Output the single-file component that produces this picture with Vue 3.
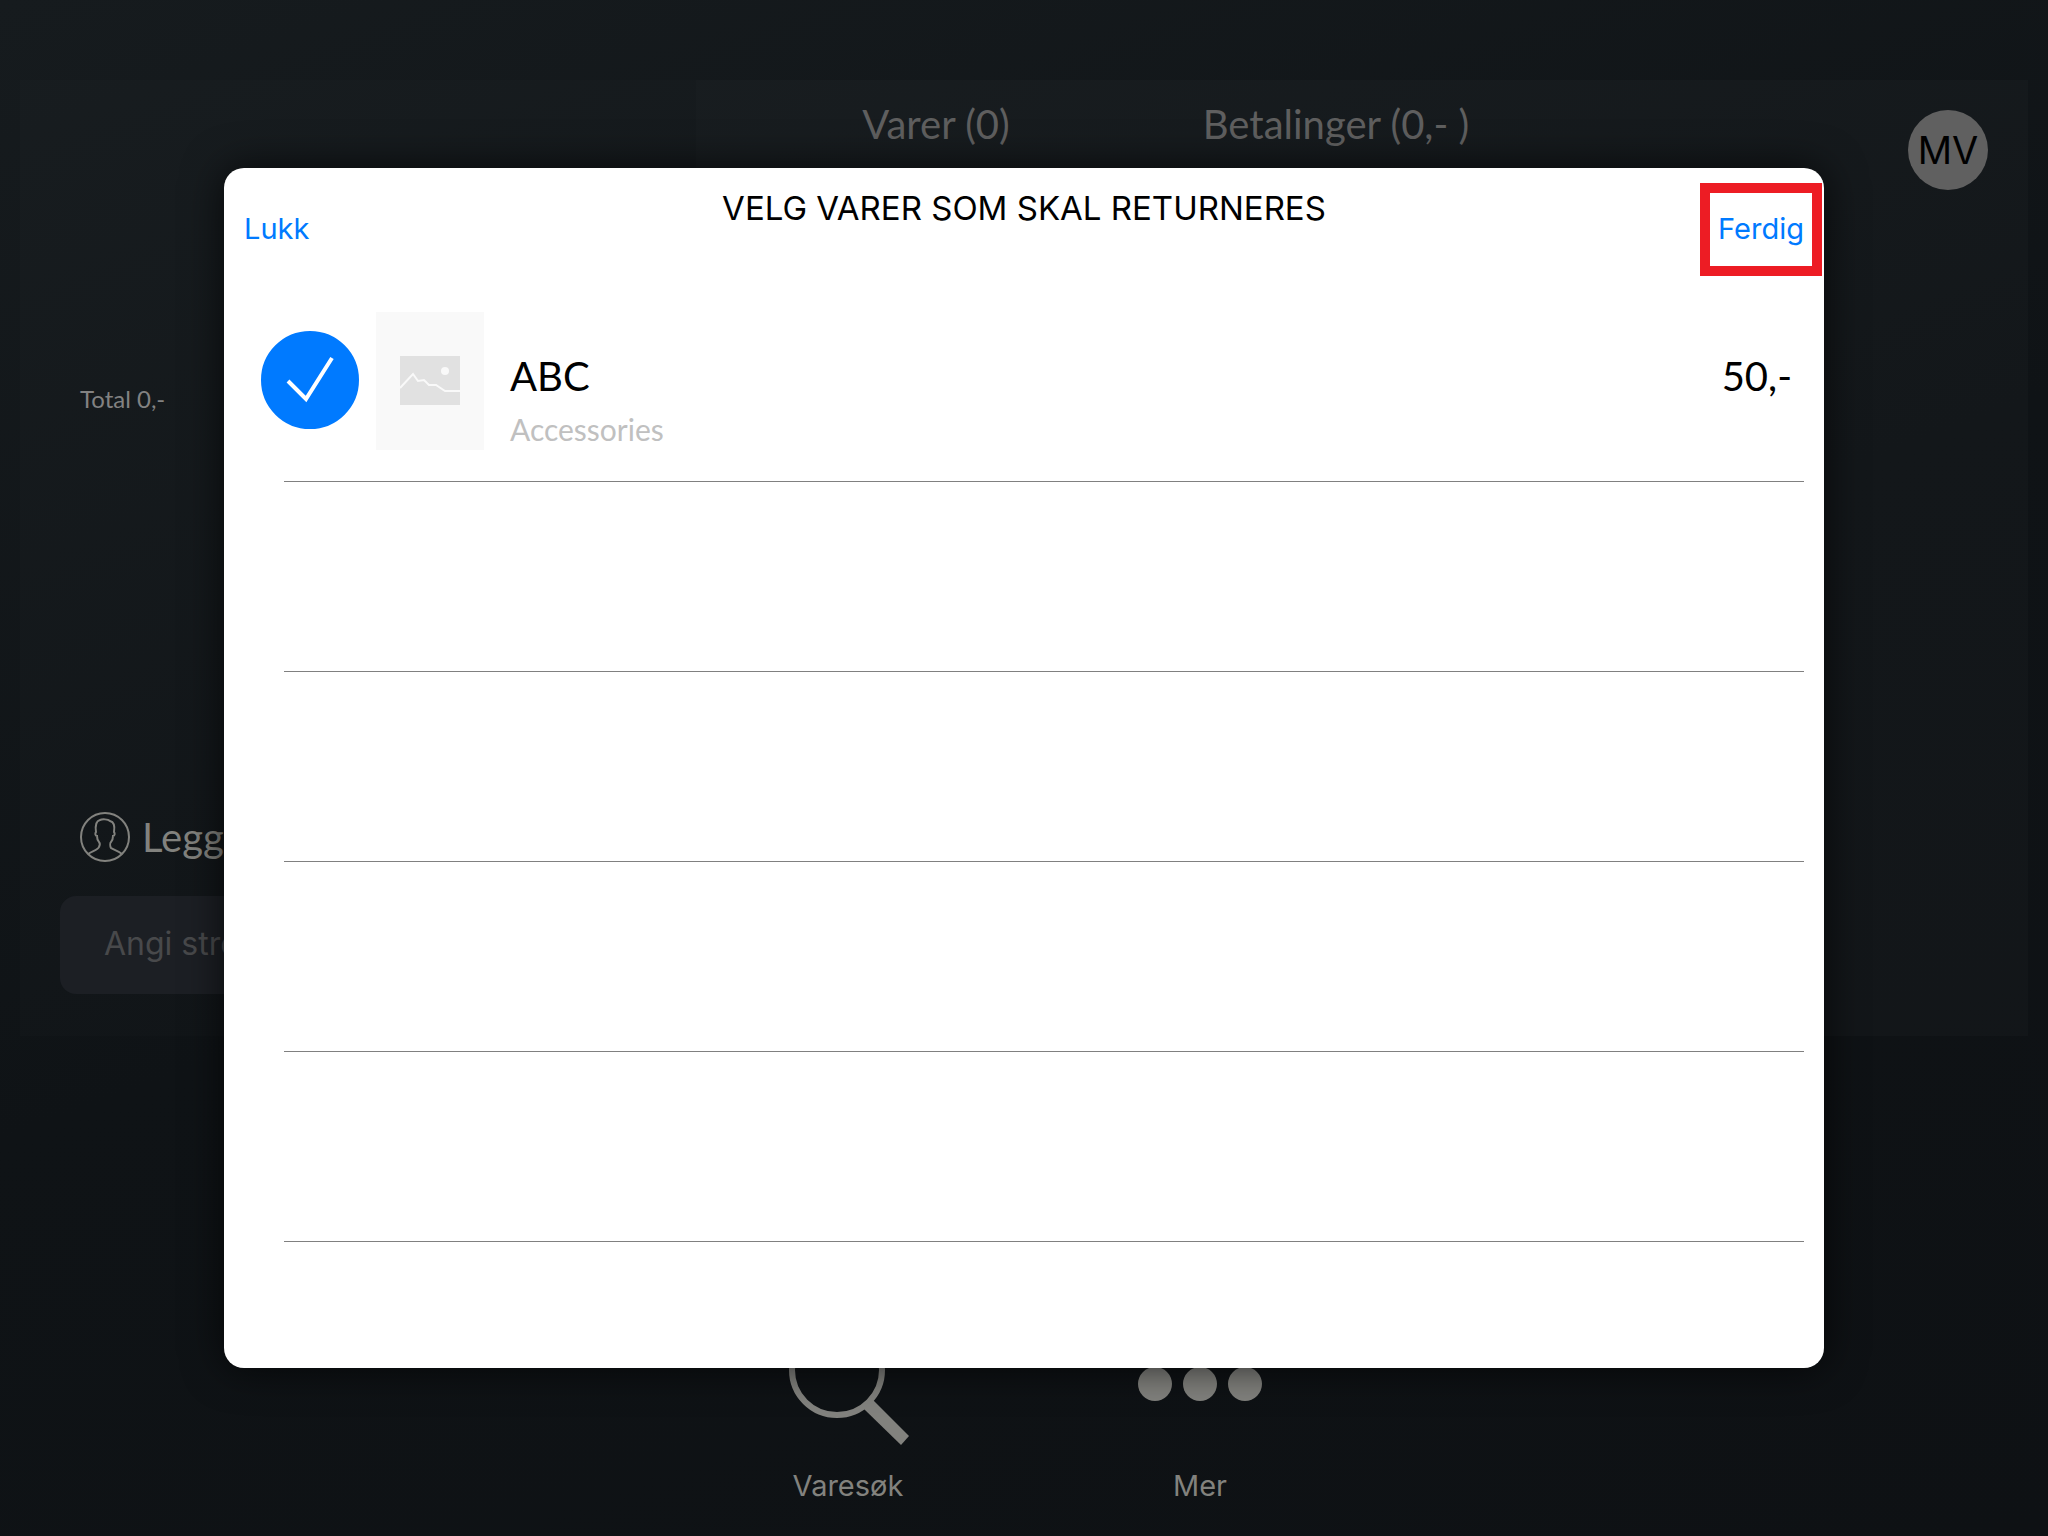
<template>
  <div class="pos-page">

    <!-- Register -->
    <main class="register">
      <section class="panel summary">
        <p class="total">Total {{ formatPrice(0) }}</p>

        <button class="customer-btn" type="button">
          <svg class="customer-icon" viewBox="0 0 50 50" aria-hidden="true">
            <circle cx="25" cy="25" r="24" />
            <path d="M8 42 C12 39 18 38 19 35 C20 33 20 31 19 30 C17 28 17 26 17 24 C15 24 15 21 16 20 C15 13 16 9 20 8 C22 7 28 7 30 9 C34 10 35 14 34 20 C35 21 35 24 33 24 C33 26 33 28 31 30 C30 31 30 34 31 36 C34 38 39 39 42 42" />
          </svg>
          <span>Legg til kunde</span>
        </button>

        <input
          v-model="barcode"
          class="barcode"
          type="text"
          placeholder="Angi strekkode"
          aria-label="Angi strekkode"
        />
      </section>

      <section class="panel basket">
        <div class="tabs">
          <button v-for="tab in tabs" :key="tab" class="tab" type="button">{{ tab }}</button>
        </div>
        <button class="avatar" type="button">MV</button>
      </section>
    </main>

    <!-- Bottom menu -->
    <nav class="bottom-nav">
      <button class="nav-btn" type="button">
        <svg class="nav-icon" viewBox="0 0 120 124" aria-hidden="true">
          <circle cx="49" cy="48" r="45" fill="none" stroke="currentColor" stroke-width="6" />
          <path d="M76 87 L85 78 L121 114 L113 123 Z" fill="currentColor" />
        </svg>
        <span>Varesøk</span>
      </button>
      <button class="nav-btn" type="button">
        <svg class="nav-icon" viewBox="0 0 120 124" aria-hidden="true">
          <circle cx="15" cy="62" r="17" fill="currentColor" />
          <circle cx="60" cy="62" r="17" fill="currentColor" />
          <circle cx="105" cy="62" r="17" fill="currentColor" />
        </svg>
        <span>Mer</span>
      </button>
    </nav>

    <!-- Return dialog -->
    <div class="overlay">
      <div class="modal" role="dialog" aria-labelledby="return-title">
        <header class="modal-header">
          <button class="link-btn" type="button">Lukk</button>
          <h1 id="return-title" class="modal-title">VELG VARER SOM SKAL RETURNERES</h1>
          <button class="link-btn done" type="button">Ferdig</button>
        </header>

        <ul class="items">
          <li v-for="item in items" :key="item.id" class="item">
            <span class="check">
              <input :id="'item-' + item.id" v-model="item.selected" type="checkbox" />
              <svg viewBox="0 0 98 98" aria-hidden="true">
                <path d="M27 50 L45 68 L71 27" />
              </svg>
            </span>
            <svg class="thumb" viewBox="0 0 108 138" aria-hidden="true">
              <rect x="24" y="44" width="60" height="49" fill="#e1e1e1" />
              <circle cx="69" cy="59" r="4" fill="#f9f9f9" />
              <path d="M24 76 L37 62 L42 69 L48 68 L53 73 L60 73 L69 79 L84 79" fill="none" stroke="#f9f9f9" stroke-width="2" />
            </svg>
            <label class="item-info" :for="'item-' + item.id">
              <span class="item-name">{{ item.name }}</span>
              <span class="item-group">{{ item.group }}</span>
            </label>
            <span class="item-price">{{ formatPrice(item.price) }}</span>
          </li>
          <li v-for="n in emptyRows" :key="'empty-' + n" class="item"></li>
        </ul>
      </div>
    </div>

  </div>
</template>

<script setup>
import { ref } from "vue";

/* ================= HELPERS ================= */
const formatPrice = (value) => `${value},-`;

/* ================= REGISTER ================= */
const barcode = ref("");
const tabs = ["Varer (0)", `Betalinger (${formatPrice(0)} )`];

/* ================= RETURN ITEMS ================= */
const items = ref([
  { id: 1, name: "ABC", group: "Accessories", price: 50, selected: true },
]);

const emptyRows = 4;
</script>

<style>
body {
  margin: 0;
  background: #0e1114;
}
</style>

<style scoped>
.pos-page {
  position: relative;
  display: flex;
  flex-direction: column;
  box-sizing: border-box;
  min-height: 100vh;
  padding: 80px 20px 0;
  background: linear-gradient(160deg, #161b1e 0%, #0f1316 50%, #0e1114 100%);
  font-family: Inter, "Liberation Sans", sans-serif;
}

button {
  margin: 0;
  padding: 0;
  border: none;
  background: none;
  font-family: inherit;
  cursor: pointer;
}

/* Register */
.register {
  flex: 1;
  display: grid;
  grid-template-columns: 169fr 333fr;
}
.panel {
  box-sizing: border-box;
  background: rgba(255, 255, 255, 0.01);
}
.summary {
  display: flex;
  flex-direction: column;
  padding: 304px 40px 42px;
}
.total {
  margin: 0 20px auto;
  color: #828282;
  font-family: Lato, sans-serif;
  font-size: 24px;
  line-height: 30px;
}
.customer-btn {
  display: flex;
  align-items: center;
  gap: 12px;
  margin: 0 20px 34px;
  color: #82827e;
  font-family: Lato, sans-serif;
  font-size: 40px;
  line-height: 50px;
}
.customer-icon {
  width: 50px;
  height: 50px;
  fill: none;
  stroke: currentColor;
  stroke-width: 2;
}
.barcode {
  box-sizing: border-box;
  width: 100%;
  height: 98px;
  padding: 0 44px 4px;
  border: none;
  border-radius: 16px;
  background: #1c1f24;
  color: #82827e;
  font-family: inherit;
  font-size: 32px;
}
.barcode::placeholder {
  color: #48494b;
}

.basket {
  display: flex;
  justify-content: space-between;
  align-items: flex-start;
  padding: 0 40px;
  background: rgba(255, 255, 255, 0.02);
}
.tabs {
  display: flex;
}
.tab {
  width: 400px;
  color: #5f5f5f;
  font-family: Lato, sans-serif;
  font-size: 40px;
  line-height: 88px;
}
.avatar {
  width: 80px;
  height: 80px;
  margin-top: 30px;
  border-radius: 50%;
  background: #606060;
  color: #000;
  font-size: 38px;
}

/* Bottom menu */
.bottom-nav {
  display: flex;
  justify-content: center;
  padding: 286px 0 28px;
}
.nav-btn {
  display: flex;
  flex-direction: column;
  align-items: center;
  gap: 18px;
  width: 352px;
  color: #82827e;
  font-size: 29px;
  line-height: 44px;
}
.nav-icon {
  width: 120px;
  height: 124px;
  overflow: visible;
}

/* Modal */
.overlay {
  position: absolute;
  inset: 0;
  display: flex;
  align-items: center;
  justify-content: center;
}
.modal {
  width: 100%;
  max-width: 1600px;
  padding-bottom: 126px;
  box-sizing: border-box;
  border-radius: 20px;
  background: #fff;
  box-shadow: 0 0 40px rgba(0, 0, 0, 0.7);
}
.modal-header {
  display: grid;
  grid-template-columns: 1fr auto 1fr;
  align-items: start;
  padding: 15px 2px 16px;
}
.modal-title {
  margin: 0;
  color: #000;
  font-size: 33px;
  font-weight: 400;
  line-height: 50px;
}
.link-btn {
  justify-self: start;
  height: 93px;
  padding: 0 18px 2px;
  color: #007aff;
  font-size: 29px;
}
.done {
  justify-self: end;
  padding: 0 8px 2px;
  border: 10px solid #ed1c24;
}

/* Items */
.items {
  margin: 0;
  padding: 0 20px 0 60px;
  list-style: none;
}
.item {
  display: flex;
  align-items: flex-start;
  box-sizing: border-box;
  height: 190px;
  border-bottom: 1px solid #808080;
  font-family: Lato, sans-serif;
}
.check {
  display: grid;
  margin: 39px 17px 0 -23px;
}
.check input,
.check svg {
  grid-area: 1 / 1;
  width: 98px;
  height: 98px;
}
.check input {
  appearance: none;
  box-sizing: border-box;
  margin: 0;
  border: 2px solid #c0c0c0;
  border-radius: 50%;
}
.check input:checked {
  border-color: #007aff;
  background: #007aff;
}
.check svg {
  fill: none;
  stroke: #fff;
  stroke-width: 4;
  pointer-events: none;
}
.thumb {
  width: 108px;
  height: 138px;
  margin: 20px 26px 0 0;
  background: #f9f9f9;
}
.item-info {
  flex: 1;
  display: flex;
  flex-direction: column;
  margin-top: 56px;
}
.item-name,
.item-price {
  color: #000;
  font-size: 40px;
  line-height: 56px;
}
.item-group {
  color: #c0c0c0;
  font-size: 30px;
  line-height: 50px;
}
.item-price {
  margin: 56px 12px 0 0;
}
</style>
